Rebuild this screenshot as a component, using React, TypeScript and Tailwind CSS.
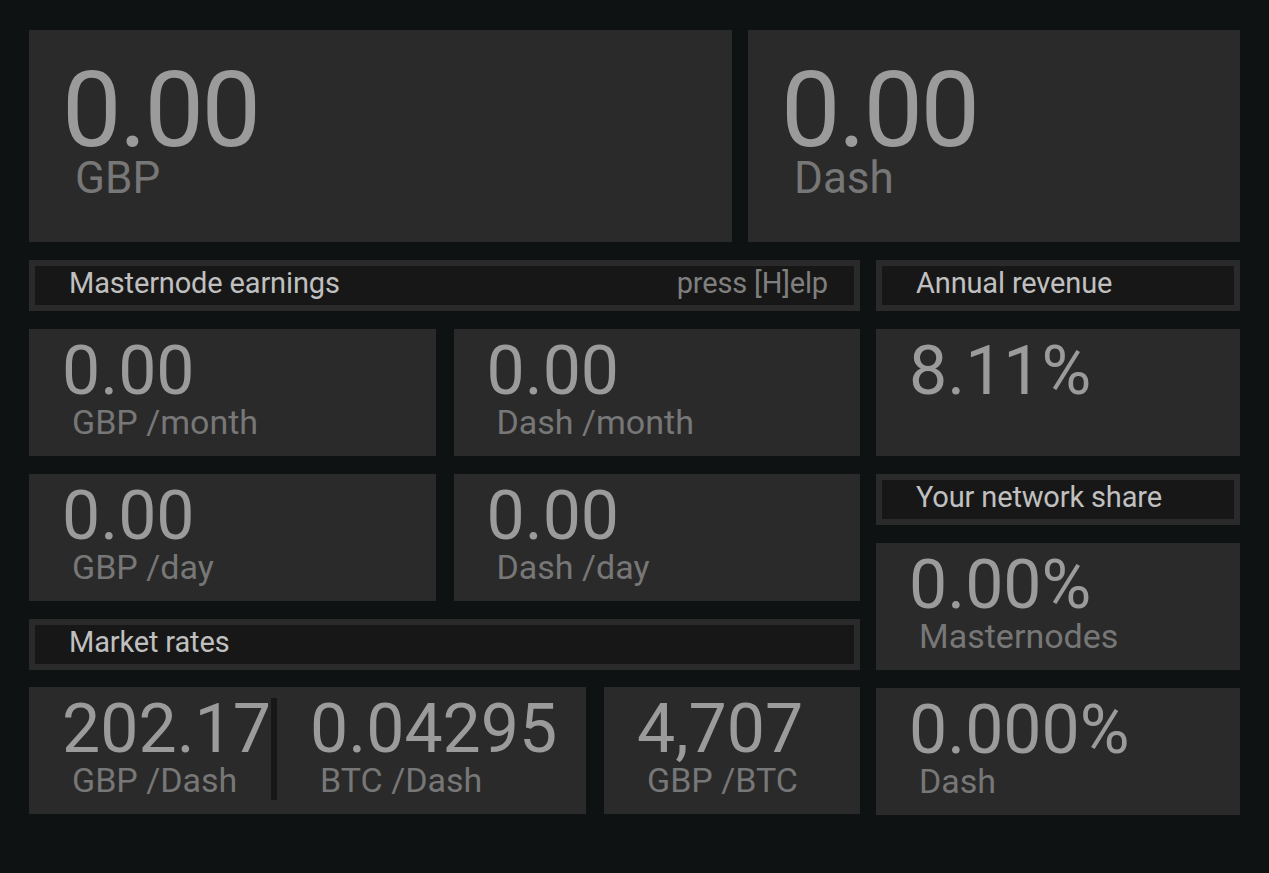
import React from "react";

const font = { fontFamily: "Roboto, 'Noto Sans', sans-serif" };

function BigStat({ value, unit }: { value: string; unit: string }) {
  return (
    <div className="bg-[#2a2a2a] h-[212px] pl-[33px] pt-[27px] flex flex-col">
      <div className="text-[106px] leading-none tracking-[-2.5px] text-[#9b9b9b]">{value}</div>
      <div className="text-[44px] leading-none text-[#777777] pl-[13px] -mt-[7px]">{unit}</div>
    </div>
  );
}

function Stat({ value, unit }: { value: string; unit?: string }) {
  return (
    <div className="pl-[33px] pt-[8px] flex flex-col">
      <div className="text-[68px] leading-none text-[#9b9b9b] whitespace-nowrap">{value}</div>
      {unit ? (
        <div className="text-[34px] leading-none text-[#777777] pl-[10px] whitespace-nowrap">{unit}</div>
      ) : null}
    </div>
  );
}

function Panel({ value, unit }: { value: string; unit?: string }) {
  return (
    <div className="bg-[#2a2a2a] h-[127px]">
      <Stat value={value} unit={unit} />
    </div>
  );
}

function Header({ title, right }: { title: string; right?: string }) {
  return (
    <div className="h-[51px] border-[6px] border-[#2a2a2a] bg-[#171717] flex items-start justify-between pl-[34px] pr-[26px]">
      <span className="text-[29px] leading-[35px] tracking-[-0.15px] text-[#c0c0c0]">{title}</span>
      {right ? (
        <span className="text-[29px] leading-[35px] tracking-[-0.15px] text-[#7f7f7f]">{right}</span>
      ) : null}
    </div>
  );
}

export default function App() {
  return (
    <div style={font} className="min-h-[873px] w-full bg-[#0f1213] pt-[30px] px-[29px]">
      <div className="grid grid-cols-[1fr_492px] gap-[16px]">
        <BigStat value="0.00" unit="GBP" />
        <BigStat value="0.00" unit="Dash" />
      </div>
      <div className="grid grid-cols-[1fr_364px] gap-[16px] mt-[18px]">
        <div className="flex flex-col gap-[18px]">
          <Header title="Masternode earnings" right="press [H]elp" />
          <div className="grid grid-cols-2 gap-[18px]">
            <Panel value="0.00" unit="GBP /month" />
            <Panel value="0.00" unit="Dash /month" />
          </div>
          <div className="grid grid-cols-2 gap-[18px]">
            <Panel value="0.00" unit="GBP /day" />
            <Panel value="0.00" unit="Dash /day" />
          </div>
          <Header title="Market rates" />
          <div className="grid grid-cols-[1fr_256px] gap-[18px] -mt-px">
            <div className="bg-[#2a2a2a] h-[127px] flex items-start">
              <Stat value="202.17" unit="GBP /Dash" />
              <div className="w-[6px] h-[102px] mt-[11px] bg-[#171717] shrink-0" />
              <Stat value="0.04295" unit="BTC /Dash" />
            </div>
            <Panel value="4,707" unit="GBP /BTC" />
          </div>
        </div>
        <div className="flex flex-col gap-[18px]">
          <Header title="Annual revenue" />
          <Panel value="8.11%" />
          <Header title="Your network share" />
          <Panel value="0.00%" unit="Masternodes" />
          <Panel value="0.000%" unit="Dash" />
        </div>
      </div>
    </div>
  );
}
